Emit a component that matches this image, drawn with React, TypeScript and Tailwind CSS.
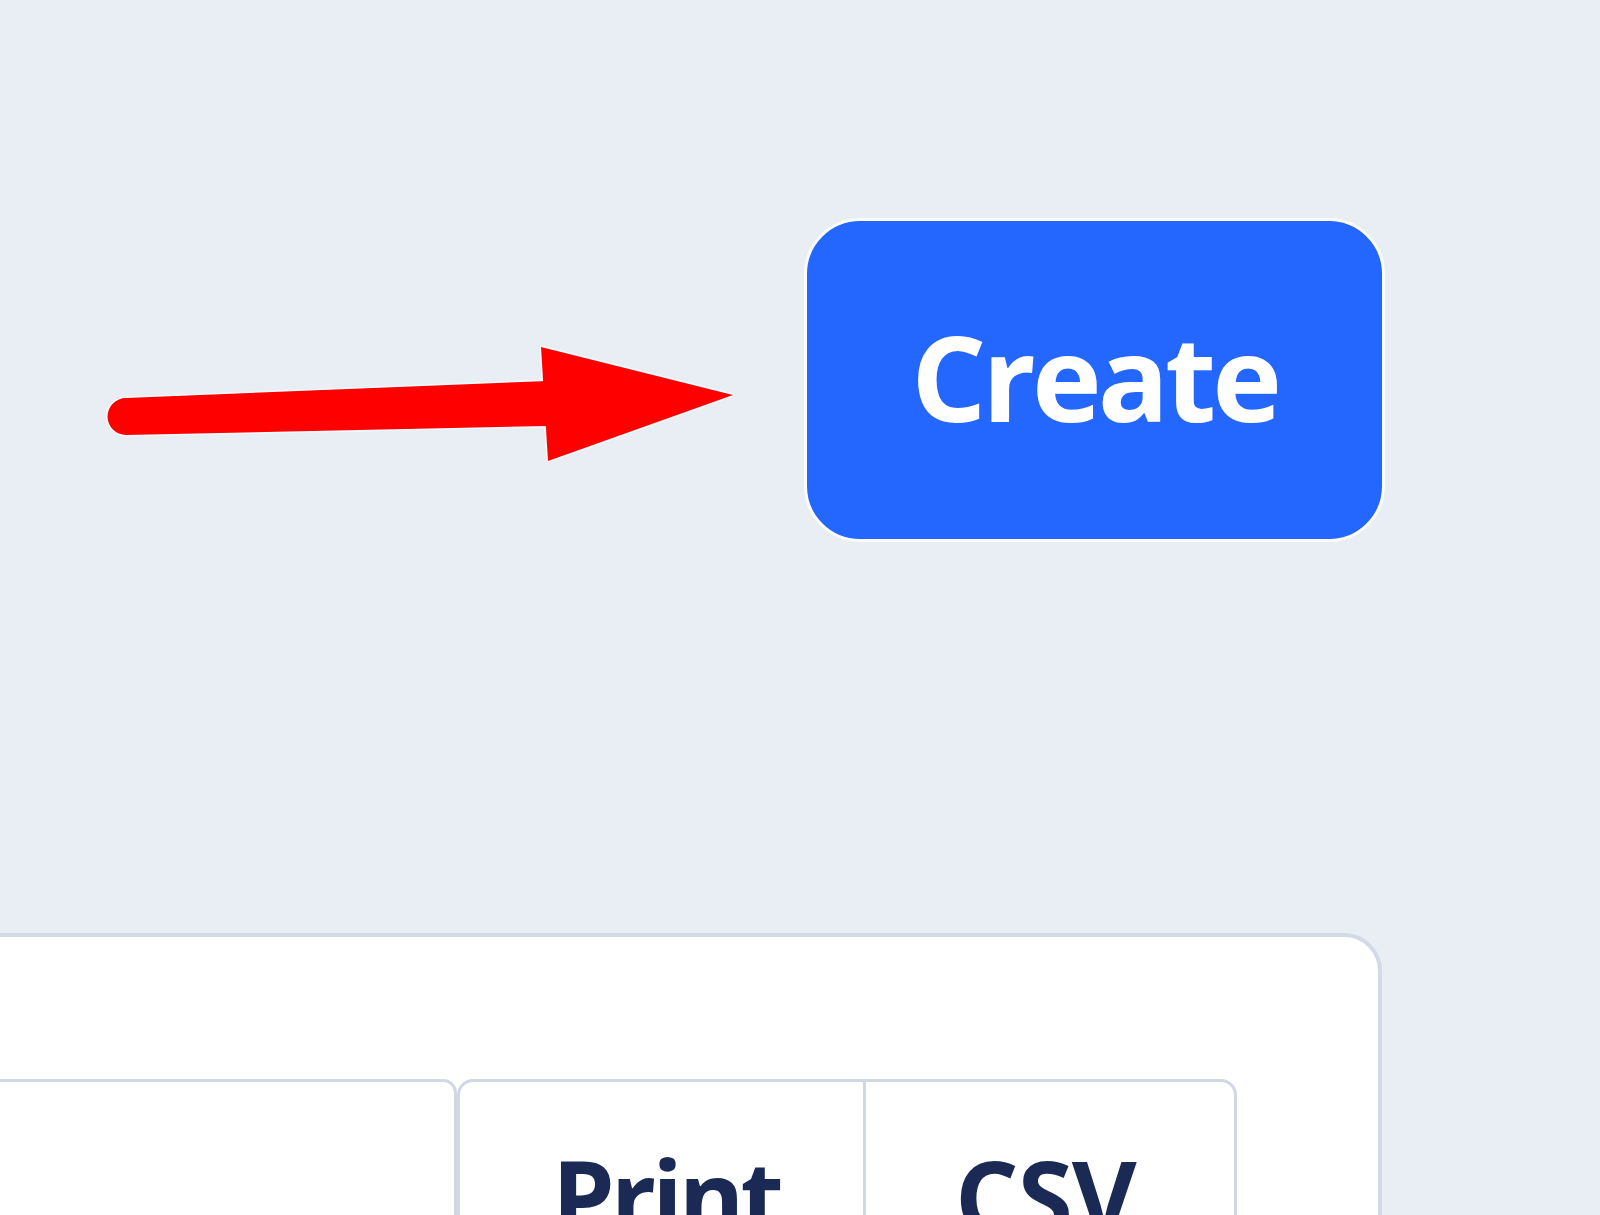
import React from "react";

export default function App() {
  return (
    <div
      className="relative w-[1600px] h-[1215px] overflow-hidden bg-[#e9edf4] flex flex-col"
      style={{ fontFamily: '"Open Sans", "Noto Sans", sans-serif' }}
    >
      <div className="h-[933px] shrink-0 pt-[218px] pl-[804px]">
        <button className="w-[581px] h-[324px] rounded-[56px] border-[3px] border-[#fdfcf4] bg-[#2367ff] text-white font-bold text-[118px] leading-none tracking-[-4px] flex items-center justify-center pb-[6px]">
          Create
        </button>
      </div>

      <div className="-ml-[60px] w-[1442px] h-[420px] shrink-0 rounded-[38px] border-4 border-[#d2d9e7] bg-white pt-[142px] pr-[141px] flex justify-end items-start">
        <div className="min-w-0 flex-1 h-[200px] rounded-tr-[14px] border-[3px] border-[#d0d8e6]" />
        <div className="shrink-0 w-[780px] h-[200px] rounded-t-[16px] border-[3px] border-[#d0d8e6] flex">
          <div className="w-[406px] shrink-0 border-r-[3px] border-[#d0d8e6] pt-[63px] pl-[92px] text-[#1b2a55] font-bold text-[100px] leading-none tracking-[-4px]">
            Print
          </div>
          <div className="flex-1 pt-[63px] pl-[89px] text-[#1b2a55] font-bold text-[100px] leading-none tracking-[-1px]">
            CSV
          </div>
        </div>
      </div>

      <svg
        className="absolute left-0 top-0"
        width="800"
        height="500"
        viewBox="0 0 800 500"
      >
        <g stroke="#f2fbff" strokeWidth="3" fill="#ff0000" strokeLinejoin="round">
          <path d="M126,398 L548,381 L548,426 L126,435 A18.5,18.5 0 0 1 126,398 Z" />
          <path d="M541,347 L733,395 L548,461 Z" />
        </g>
        <g fill="#ff0000">
          <path d="M126,398 L548,381 L548,426 L126,435 A18.5,18.5 0 0 1 126,398 Z" />
          <path d="M541,347 L733,395 L548,461 Z" />
        </g>
      </svg>
    </div>
  );
}
